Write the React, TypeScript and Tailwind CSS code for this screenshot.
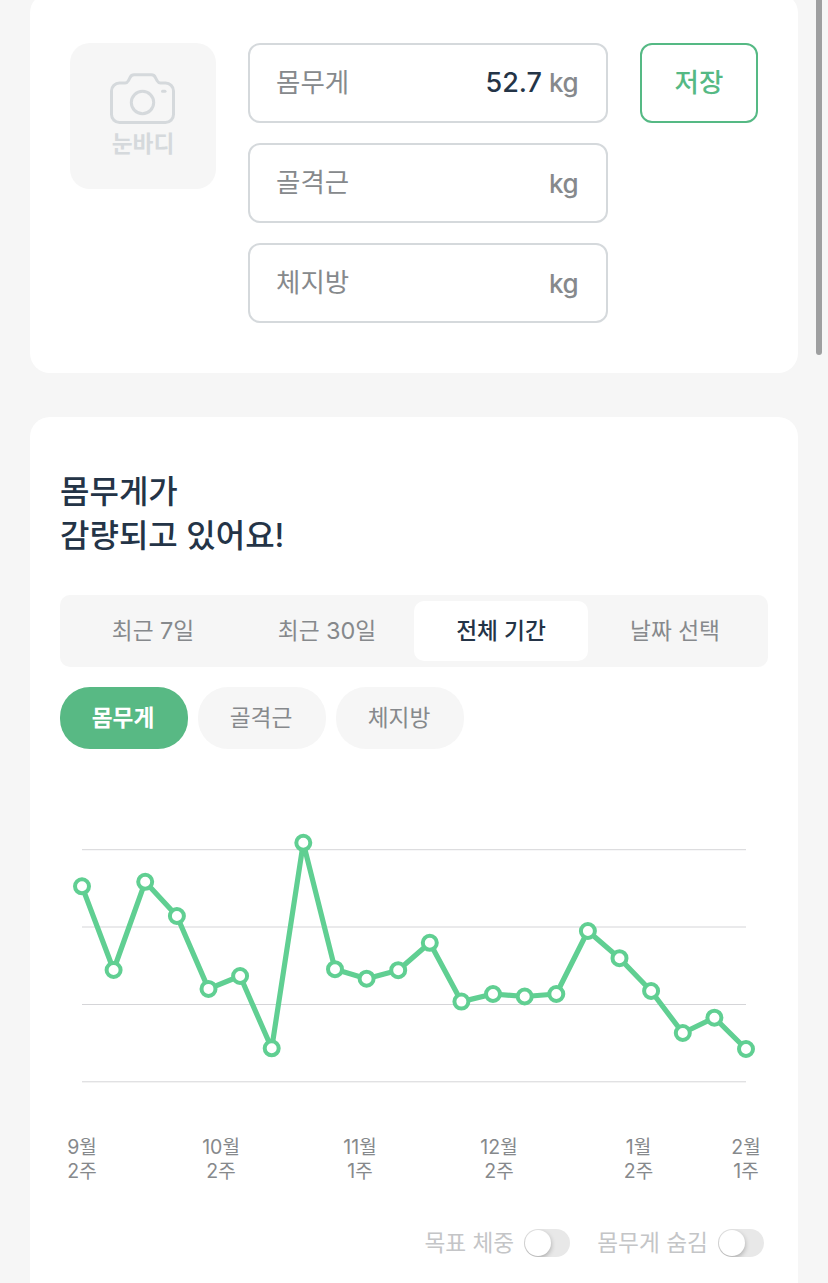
import { Fragment } from "react";

const points = [
  [82, 886.3], [113.6, 970], [145.2, 881.8], [176.9, 916], [208.5, 988.9], [240.1, 976],
  [271.7, 1048.3], [303.3, 842.8], [335, 969.2], [366.6, 978.7], [398.2, 970.2], [429.8, 942.8],
  [461.4, 1001.6], [493, 994], [524.7, 996.5], [556.3, 994], [587.9, 931], [619.5, 958.2],
  [651.1, 991], [682.8, 1033], [714.4, 1017.7], [746, 1049],
];

const gridLines = [849.7, 927, 1004.5, 1081.8];

const weeks = [
  { x: 82, month: "9", week: "2" },
  { x: 221, month: "10", week: "2" },
  { x: 360, month: "11", week: "1" },
  { x: 499, month: "12", week: "2" },
  { x: 638.5, month: "1", week: "2" },
  { x: 746, month: "2", week: "1" },
];

const fields = [
  { label: "몸무게", value: "52.7" },
  { label: "골격근", value: "" },
  { label: "체지방", value: "" },
];

const periods = ["최근 7일", "최근 30일", "전체 기간", "날짜 선택"];
const metrics = ["몸무게", "골격근", "체지방"];

// Digits are drawn a little larger than the Hangul beside them
const Label = ({ text }: { text: string }) => (
  <>
    {text.split(/(\d+)/).map((part, i) =>
      /\d/.test(part) ? (
        <span key={i} className="text-[23.5px]">{part}</span>
      ) : (
        <Fragment key={i}>{part}</Fragment>
      )
    )}
  </>
);

const CameraIcon = () => (
  <svg className="h-[52px] w-[66px]" viewBox="0 0 66 52" fill="none" stroke="#d5d9dc" strokeWidth="3">
    <path
      d="M9.5 10H15c1.6 0 2.6-.8 3.3-2.1l1.9-3.600c.8-1.600 2-2.500 3.900-2.500h17.300c1.900 0 3.100.9 3.900 2.500l1.900 3.600c.7 1.300 1.700 2.100 3.300 2.100h5a8 8 0 0 1 8 8v23.500a8 8 0 0 1-8 8h-46a8 8 0 0 1-8-8V18a8 8 0 0 1 8-8Z"
      strokeLinejoin="round"
    />
    <circle cx="32.500" cy="29.500" r="11.200" />
    <path d="M52.500 18.200h2.500" strokeLinecap="round" />
  </svg>
);

const RecordForm = () => (
  <section className="-mt-[7px] flex items-start gap-8 rounded-[20px] bg-white px-10 py-[50px]">
    <button className="flex h-[146px] w-[146px] flex-col items-center rounded-[20px] bg-[#f6f6f6] pt-[30px] text-[22.7px] leading-[38px] font-bold text-[#d5d9dc]">
      <CameraIcon />
      <span>눈바디</span>
    </button>
    <div className="flex w-[360px] flex-col gap-5">
      {fields.map((field) => (
        <label
          key={field.label}
          className="flex h-20 items-center justify-between rounded-xl border-2 border-[#d5d9dc] pr-7 pl-[26px] text-[26.5px] text-[#86898c]"
        >
          <span>{field.label}</span>
          <span className="flex items-baseline gap-[7px] font-[450]">
            <span className="text-[27px] text-[#243447]">{field.value}</span>
            <span className="text-[26px] tracking-[-0.02em]">kg</span>
          </span>
        </label>
      ))}
    </div>
    <button className="h-20 w-[118px] rounded-xl border-2 border-[#55b984] text-[26.5px] font-medium text-[#55b984]">
      저장
    </button>
  </section>
);

const WeightChart = () => (
  <svg className="mt-[31px] h-[420px] w-[708px] overflow-visible" viewBox="60 780 708 420">
    {gridLines.map((y) => (
      <line key={y} x1="82" x2="746" y1={y} y2={y} stroke="#d5d5d8" />
    ))}
    <polyline points={points.join(" ")} fill="none" stroke="#60cf92" strokeWidth="5.200" strokeLinejoin="round" />
    {points.map(([x, y]) => (
      <circle key={x} cx={x} cy={y} r="7" fill="#fff" stroke="#60cf92" strokeWidth="4" />
    ))}
    <g textAnchor="middle" fill="#86898c" className="text-[19px]">
      {weeks.map(({ x, month, week }) => (
        <Fragment key={x}>
          <text x={x} y="1153.500"><tspan className="text-[19.5px]">{month}</tspan>월</text>
          <text x={x} y="1177.500"><tspan className="text-[19.5px]">{week}</tspan>주</text>
        </Fragment>
      ))}
    </g>
  </svg>
);

const Toggle = ({ label }: { label: string }) => (
  <label className="flex items-center gap-[10px] text-[22.7px] leading-7 text-[#c4c5c7]">
    {label}
    <span className="flex h-7 w-[46px] items-center overflow-hidden rounded-full bg-[#e8e8e8] p-px">
      <span className="h-[26px] w-[26px] rounded-full bg-white shadow-[0_2px_5px_rgba(0,0,0,0.28)]" />
    </span>
  </label>
);

export default function App() {
  return (
    <div className="relative h-[1283px] w-[828px] overflow-hidden bg-[#f6f6f6] font-['Inter','Noto_Sans_CJK_KR',sans-serif]">
      <main className="flex flex-col gap-11 px-[30px]">
        <RecordForm />
        <section className="rounded-[20px] bg-white px-[30px] pt-[53px] pb-20">
          <h1 className="text-[32px] leading-[44px] font-medium text-[#243447]">
            몸무게가
            <br />
            감량되고 있어요!
          </h1>
          <div className="mt-[37px] flex h-[72px] rounded-[10px] bg-[#f6f6f6] p-[6px]">
            {periods.map((period) => (
              <button
                key={period}
                className={
                  period === "전체 기간"
                    ? "flex-1 rounded-[10px] bg-white text-[22.7px] font-medium text-[#243447]"
                    : "flex-1 text-[22.7px] text-[#86898c]"
                }
              >
                <Label text={period} />
              </button>
            ))}
          </div>
          <div className="mt-5 flex gap-[10px]">
            {metrics.map((metric) => (
              <button
                key={metric}
                className={
                  metric === "몸무게"
                    ? "h-[62px] w-32 rounded-[30px] bg-[#58b984] pr-[2px] text-[22.7px] font-bold text-white"
                    : "h-[62px] w-32 rounded-[30px] bg-[#f6f6f6] pr-[2px] text-[22.7px] text-[#86898c]"
                }
              >
                {metric}
              </button>
            ))}
          </div>
          <WeightChart />
          <div className="mt-[29px] flex justify-end gap-[27px] pr-1">
            <Toggle label="목표 체중" />
            <Toggle label="몸무게 숨김" />
          </div>
        </section>
      </main>
      <div className="absolute top-0 right-[6px] h-[355px] w-[6px] rounded-b-full bg-[#9e9fa0]" />
    </div>
  );
}
